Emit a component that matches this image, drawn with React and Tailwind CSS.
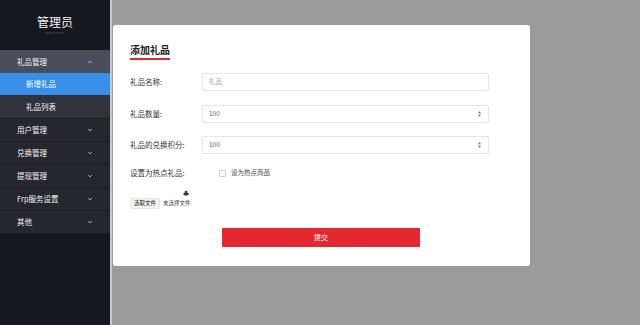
import React from "react";

const menu = [
  { name: "用户管理" },
  { name: "兑换管理" },
  { name: "提现管理" },
  { name: "Frp服务设置" },
  { name: "其他" },
];

const Chevron = ({ up }) => (
  <svg width="6" height="6" viewBox="0 0 10 10" className="text-gray-300">
    <path
      d={up ? "M2 6.5 L5 3.5 L8 6.5" : "M2 3.5 L5 6.5 L8 3.5"}
      fill="none"
      stroke="currentColor"
      strokeWidth="1.3"
    />
  </svg>
);

const Spinner = () => (
  <svg width="5" height="8" viewBox="0 0 6 10" className="text-gray-500">
    <path d="M1 4 L3 1.5 L5 4 Z" fill="currentColor" />
    <path d="M1 6 L3 8.5 L5 6 Z" fill="currentColor" />
  </svg>
);

export default function App() {
  return (
    <div
      className="flex w-[640px] h-[325px] overflow-hidden bg-[#9b9b9b]"
      style={{ fontFamily: '"Noto Sans CJK SC", "Liberation Sans", sans-serif' }}
    >
      {/* Sidebar */}
      <div className="w-[112px] shrink-0 flex flex-col bg-[#17181d] border-r-2 border-[#c9c9c9]">
        <div className="h-[50px] flex flex-col items-center justify-center">
          <div className="text-[12px] text-gray-100 leading-none">管理员</div>
          <div className="mt-[4px] text-[3px] text-gray-600 leading-none">administrator</div>
        </div>
        <div className="h-[23px] flex items-center justify-between px-[17px] bg-[#4a4e5b] text-[7.5px] text-gray-100">
          <span>礼品管理</span>
          <Chevron up />
        </div>
        <div className="h-[22px] flex items-center pl-[26px] bg-[#3a8fe8] text-[7.5px] text-white">
          新增礼品
        </div>
        <div className="h-[23px] flex items-center pl-[26px] bg-[#30333b] text-[7.5px] text-gray-100">
          礼品列表
        </div>
        {menu.map((m) => (
          <div
            key={m.name}
            className="h-[23px] flex items-center justify-between px-[17px] bg-[#25272d] border-t border-[#1c1d22] text-[7.5px] text-gray-100"
          >
            <span>{m.name}</span>
            <Chevron />
          </div>
        ))}
      </div>

      {/* Main */}
      <div className="flex-1 pt-[25px] pl-[1px]">
        <div className="w-[417px] h-[241px] bg-white rounded-[3px] pl-[17px] pt-[20px] flex flex-col items-start">
          <div className="text-[10px] font-bold text-[#222] leading-none pb-[3px] border-b-2 border-[#e02b2b]">
            添加礼品
          </div>

          <div className="mt-[13px] flex items-center h-[18px]">
            <span className="w-[72px] text-[7.5px] text-[#333]">礼品名称:</span>
            <div className="w-[287px] h-[18px] border border-[#e6e6e6] rounded-[2px] flex items-center px-[6px] text-[6.5px] text-[#aaa]">
              礼品
            </div>
          </div>

          <div className="mt-[14px] flex items-center h-[18px]">
            <span className="w-[72px] text-[7.5px] text-[#333]">礼品数量:</span>
            <div className="w-[287px] h-[18px] border border-[#e6e6e6] rounded-[2px] flex items-center justify-between px-[6px] text-[6.5px] text-[#666]">
              <span>100</span>
              <Spinner />
            </div>
          </div>

          <div className="mt-[13px] flex items-center h-[18px]">
            <span className="w-[72px] text-[7.5px] text-[#333]">礼品的兑换积分:</span>
            <div className="w-[287px] h-[18px] border border-[#e6e6e6] rounded-[2px] flex items-center justify-between px-[6px] text-[6.5px] text-[#666]">
              <span>100</span>
              <Spinner />
            </div>
          </div>

          <div className="mt-[10px] flex items-center h-[18px]">
            <span className="w-[89px] text-[7.5px] text-[#333]">设置为热点礼品:</span>
            <span className="w-[7px] h-[7px] border border-[#ccc] rounded-[1px]"></span>
            <span className="ml-[5px] text-[6.5px] text-[#444]">设为热点商品</span>
          </div>

          <div className="mt-[9px] flex items-end h-[18px] relative">
            <span className="px-[3px] h-[11px] flex items-center bg-[#f3f3f3] border border-[#e5e5e5] rounded-[2px] text-[5.5px] text-[#222]">
              选取文件
            </span>
            <span className="ml-[3px] mb-[2px] text-[5.5px] text-[#444]">未选择文件</span>
            <span className="absolute left-[53px] top-[-1px] text-[6px] text-[#333] leading-none">♣</span>
          </div>

          <div className="mt-[19px] ml-[92px] w-[198px] h-[19px] bg-[#e3292f] rounded-[1px] flex items-center justify-center text-[7px] text-white">
            提交
          </div>
        </div>
      </div>
    </div>
  );
}
